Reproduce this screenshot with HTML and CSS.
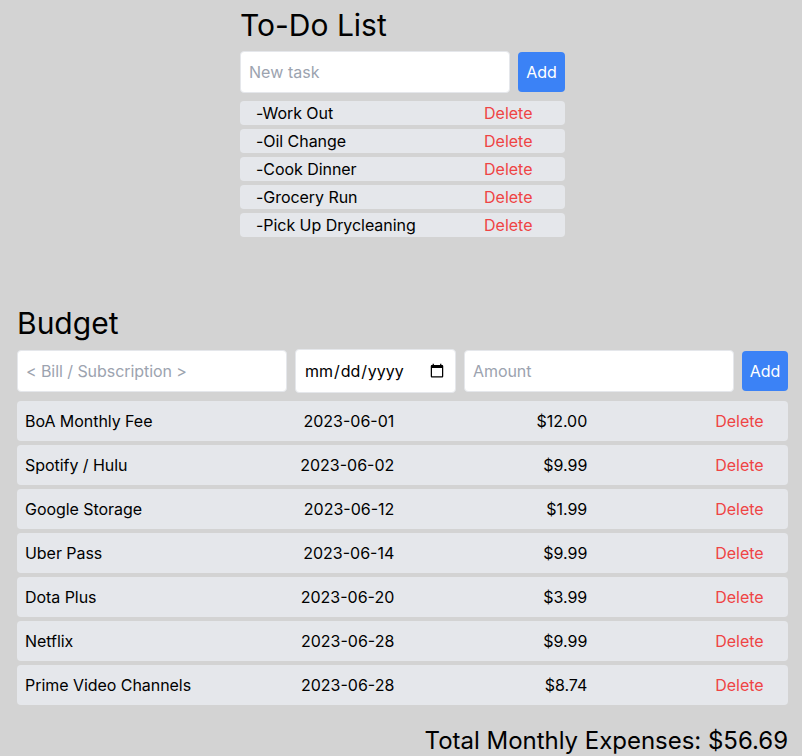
FILE: index.html
```html
<!DOCTYPE html>
<html lang="en">
<head>
<meta charset="utf-8">
<title>To-Do List and Budget</title>
<link rel="stylesheet" href="styles.css">
</head>
<body>
<section class="todo">
  <h1>To-Do List</h1>
  <form class="row-form">
    <input class="field task" type="text" placeholder="New task">
    <button class="add" type="button">Add</button>
  </form>
  <ul class="tasks">
    <li><span>-Work Out</span><button class="delete" type="button">Delete</button></li>
    <li><span>-Oil Change</span><button class="delete" type="button">Delete</button></li>
    <li><span>-Cook Dinner</span><button class="delete" type="button">Delete</button></li>
    <li><span>-Grocery Run</span><button class="delete" type="button">Delete</button></li>
    <li><span>-Pick Up Drycleaning</span><button class="delete" type="button">Delete</button></li>
  </ul>
</section>
<section class="budget">
  <h1>Budget</h1>
  <form class="row-form">
    <input class="field" type="text" placeholder="&lt; Bill / Subscription &gt;">
    <input class="field date" type="date">
    <input class="field" type="text" placeholder="Amount">
    <button class="add" type="button">Add</button>
  </form>
  <ul class="bills">
    <li><span>BoA Monthly Fee</span><span class="num">2023-06-01</span><span class="num">$12.00</span><button class="delete" type="button">Delete</button></li>
    <li><span>Spotify / Hulu</span><span class="num">2023-06-02</span><span class="num">$9.99</span><button class="delete" type="button">Delete</button></li>
    <li><span>Google Storage</span><span class="num">2023-06-12</span><span class="num">$1.99</span><button class="delete" type="button">Delete</button></li>
    <li><span>Uber Pass</span><span class="num">2023-06-14</span><span class="num">$9.99</span><button class="delete" type="button">Delete</button></li>
    <li><span>Dota Plus</span><span class="num">2023-06-20</span><span class="num">$3.99</span><button class="delete" type="button">Delete</button></li>
    <li><span>Netflix</span><span class="num">2023-06-28</span><span class="num">$9.99</span><button class="delete" type="button">Delete</button></li>
    <li><span>Prime Video Channels</span><span class="num">2023-06-28</span><span class="num">$8.74</span><button class="delete" type="button">Delete</button></li>
  </ul>
  <p class="total">Total Monthly Expenses: $56.69</p>
</section>
</body>
</html>
```

FILE: styles.css
```css
* { box-sizing: border-box; }
body {
  margin: 0;
  background: #d3d3d3;
  color: #000;
  font: 400 16px/24px Inter, "Liberation Sans", sans-serif;
  overflow: hidden;
}
h1, ul, p { margin: 0; padding: 0; }
h1 { font-size: 30px; line-height: 36px; font-weight: 400; }
ul { list-style: none; display: grid; gap: 4px; }
input, button { font: inherit; margin: 0; }
button { border: 0; }
.todo { width: 325px; margin-left: 240px; padding-top: 7px; }
.budget { width: 771px; margin: 68px 0 0 17px; }
.row-form { display: flex; align-items: center; gap: 8px; margin: 8px 0; }
.field {
  width: 270px;
  height: 42px;
  padding: 8px;
  border: 1px solid #e5e7eb;
  border-radius: 4px;
  background: #fff;
  color: #000;
  letter-spacing: -0.06px;
}
.field::placeholder { color: #9ca3af; opacity: 1; }
.task { letter-spacing: 0.06px; }
.date { width: 161px; height: 44px; }
.add {
  flex: 1;
  height: 40px;
  padding: 0;
  border-radius: 4px;
  background: #3b82f6;
  color: #fff;
}
.delete { padding: 0; background: none; color: #ef4444; line-height: 24px; }
li { background: #e5e7eb; border-radius: 4px; }
li span:first-child { letter-spacing: -0.05px; }
.tasks li {
  display: flex;
  justify-content: space-between;
  height: 24px;
  padding: 0 32.5px 0 16px;
}
.bills li {
  display: grid;
  grid-template-columns: 185px 184.3px 193px 176.4px;
  height: 40px;
  padding: 8px;
}
.num, .bills .delete { text-align: right; }
.total { margin-top: 20px; font-size: 24px; line-height: 32px; text-align: right; letter-spacing: -0.02px; }
```
